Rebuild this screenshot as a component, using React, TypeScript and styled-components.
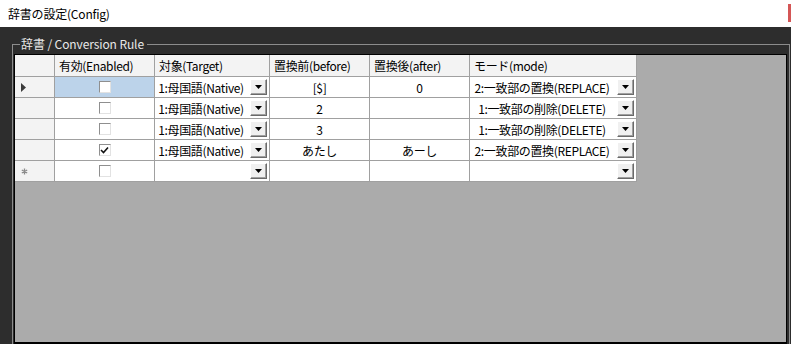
import React from 'react';
import styled, { createGlobalStyle } from 'styled-components';

const GlobalStyle = createGlobalStyle`
	html, body {
		margin: 0;
		padding: 0;
	}
	body {
		font-family: "Noto Sans CJK JP", "Noto Sans", sans-serif;
		font-size: 12px;
		color: #000;
	}
	* {
		box-sizing: border-box;
	}
`;

type Row = {
	enabled: boolean;
	target: string;
	before: string;
	after: string;
	mode: string;
	current?: boolean;
	isNew?: boolean;
};

const TARGET = '1:母国語(Native)';
const REPLACE = '2:一致部の置換(REPLACE)';
const DELETE = '1:一致部の削除(DELETE)';

const rows: Row[] = [
	{ enabled: false, target: TARGET, before: '[$]', after: '0', mode: REPLACE, current: true },
	{ enabled: false, target: TARGET, before: '2', after: '', mode: DELETE },
	{ enabled: false, target: TARGET, before: '3', after: '', mode: DELETE },
	{ enabled: true, target: TARGET, before: 'あたし', after: 'あーし', mode: REPLACE },
	{ enabled: false, target: '', before: '', after: '', mode: '', isNew: true },
];

const headers = ['有効(Enabled)', '対象(Target)', '置換前(before)', '置換後(after)', 'モード(mode)'];

const Checkbox = ({ checked }: { checked: boolean }) => (
	<Box>
		{checked && (
			<svg width="9" height="9" viewBox="0 0 9 9">
				<path d="M1 4 L3.5 6.5 L8 1.5" stroke="#111" strokeWidth="1.6" fill="none" />
			</svg>
		)}
	</Box>
);

const DropButton = () => (
	<Drop>
		<svg width="7" height="4" viewBox="0 0 7 4">
			<path d="M0 0 H7 L3.5 4 Z" fill="#000" />
		</svg>
	</Drop>
);

const Combo = ({ text }: { text: string }) => (
	<ComboWrap>
		<ComboText>{text}</ComboText>
		<DropButton />
	</ComboWrap>
);

const RowMarker = ({ row }: { row: Row }) => {
	if (row.current) {
		return (
			<svg width="5" height="9" viewBox="0 0 5 9">
				<path d="M0 0 L5 4.5 L0 9 Z" fill="#3c3c3c" />
			</svg>
		);
	}
	if (row.isNew) {
		return (
			<svg width="7" height="7" viewBox="0 0 7 7">
				<path d="M3.5 0.5 V6.5 M0.8 2 L6.2 5 M0.8 5 L6.2 2" stroke="#8a8a8a" strokeWidth="1.3" />
			</svg>
		);
	}
	return null;
};

const App = () => {
	return (
		<>
			<GlobalStyle />
			<Window>
				<TitleBar>
					<TitleText>辞書の設定(Config)</TitleText>
					<Marker />
				</TitleBar>
				<Body>
					<Group>
						<Legend>辞書 / Conversion Rule</Legend>
						<GridView>
							<Table>
								<HeaderCell />
								{headers.map((h) => (
									<HeaderCell key={h}>{h}</HeaderCell>
								))}
								{rows.map((row, i) => (
									<React.Fragment key={i}>
										<RowHeader>
											<RowMarker row={row} />
										</RowHeader>
										<Cell align="center" selected={row.current}>
											<Checkbox checked={row.enabled} />
										</Cell>
										<Cell>
											<Combo text={row.target} />
										</Cell>
										<Cell align="center">{row.before}</Cell>
										<Cell align="center">{row.after}</Cell>
										<Cell>
											<Combo text={row.mode} />
										</Cell>
									</React.Fragment>
								))}
							</Table>
						</GridView>
					</Group>
				</Body>
			</Window>
		</>
	);
};

export default App;

const Window = styled.div`
	width: 791px;
	height: 344px;
	display: flex;
	flex-direction: column;
	overflow: hidden;
	background: #2d2d2d;
`;

const TitleBar = styled.div`
	height: 27px;
	flex: none;
	display: flex;
	align-items: center;
	padding-left: 8px;
	background: #fff;
	letter-spacing: -0.2px;
`;

const TitleText = styled.span`
	flex: 1;
`;

const Marker = styled.span`
	align-self: flex-start;
	width: 3px;
	height: 18px;
	margin-top: 4px;
	background: #d45656;
`;

const Body = styled.div`
	flex: 1;
	min-height: 0;
	display: flex;
	padding: 9px 1px 0 12px;
`;

const Group = styled.fieldset`
	flex: 1;
	min-width: 0;
	margin: 0;
	padding: 0 1px;
	border: 1px solid #8c8c8c;
	border-bottom: none;
	display: flex;
	flex-direction: column;
`;

const Legend = styled.legend`
	margin-left: 6px;
	padding: 0 3px 0 1px;
	line-height: 16px;
	color: #e8e8e8;
	letter-spacing: -0.1px;
`;

const GridView = styled.div`
	flex: 1;
	margin: 2px 1px 0 0;
	border: 1px solid #000;
	border-bottom-width: 2px;
	background: #ababab;
`;

const Table = styled.div`
	display: grid;
	grid-template-columns: 40px 100px 115px 100px 100px 167px;
	width: max-content;
	letter-spacing: -0.35px;
`;

const HeaderCell = styled.div`
	height: 22px;
	display: flex;
	align-items: center;
	padding-left: 4px;
	background: #f3f3f3;
	border-right: 1px solid #a0a0a0;
	border-bottom: 1px solid #a0a0a0;
	white-space: nowrap;
`;

const RowHeader = styled.div`
	height: 21px;
	display: flex;
	align-items: center;
	padding-left: 6px;
	background: #f3f3f3;
	border-right: 1px solid #a0a0a0;
	border-bottom: 1px solid #a0a0a0;
`;

const Cell = styled.div<{ align?: 'center'; selected?: boolean }>`
	height: 21px;
	display: flex;
	align-items: center;
	justify-content: ${(p) => (p.align === 'center' ? 'center' : 'flex-start')};
	background: ${(p) => (p.selected ? '#bcd3ea' : '#fff')};
	border-right: 1px solid #a0a0a0;
	border-bottom: 1px solid #a0a0a0;
	white-space: nowrap;
`;

const Box = styled.span`
	width: 12px;
	height: 12px;
	display: flex;
	align-items: center;
	justify-content: center;
	background: #fff;
	border: 1px solid;
	border-color: #8f8f8f #e2e2e2 #e2e2e2 #8f8f8f;
`;

const ComboWrap = styled.div`
	flex: 1;
	min-width: 0;
	height: 100%;
	display: flex;
	align-items: center;
	padding-right: 2px;
`;

const ComboText = styled.span`
	flex: 1;
	min-width: 0;
	text-align: center;
	padding-right: 3px;
`;

const Drop = styled.span`
	flex: none;
	width: 17px;
	height: 16px;
	display: flex;
	align-items: center;
	justify-content: center;
	background: #f0f0f0;
	border: 1px solid;
	border-color: #fff #6a6a6a #6a6a6a #fff;
	box-shadow: inset -1px -1px 0 #a0a0a0;
`;
